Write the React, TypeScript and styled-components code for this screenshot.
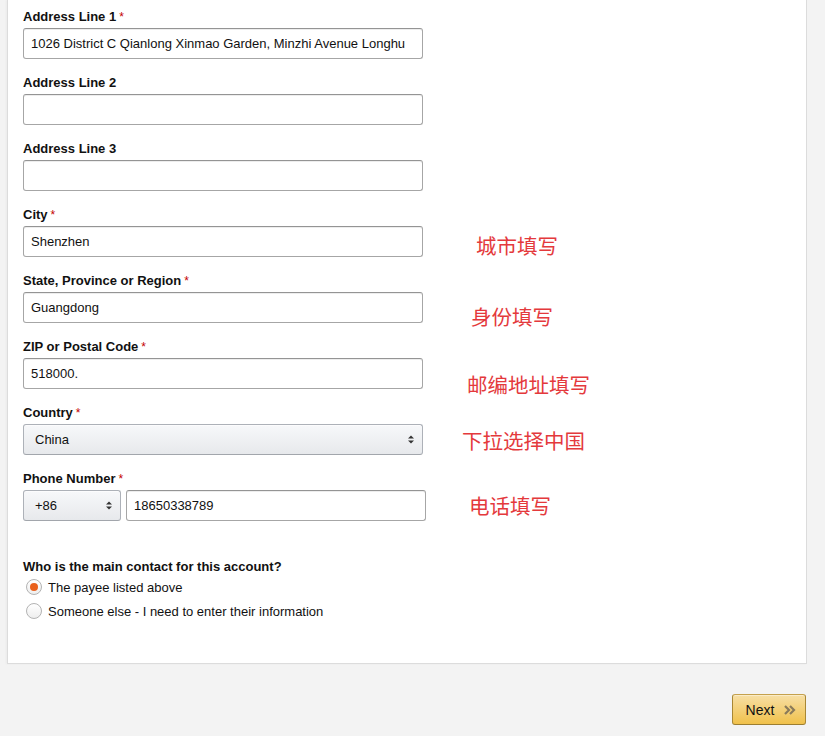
import React from "react";
import styled, { createGlobalStyle } from "styled-components";

const Global = createGlobalStyle`
  html, body { margin: 0; padding: 0; background: #f3f3f3; }
  body { font-family: Arial, "Liberation Sans", sans-serif; color: #111; }
  * { box-sizing: border-box; }
`;

const Page = styled.div`
  width: 825px;
  height: 736px;
  overflow: hidden;
  background: #f3f3f3;
`;

const Panel = styled.div`
  margin-left: 7px;
  width: 800px;
  background: #fff;
  border: 1px solid #dcdcdc;
  border-top: none;
  box-shadow: -1px 0 2px rgba(0, 0, 0, 0.04);
  padding: 9px 15px 40px 15px;
`;

const Group = styled.div`
  position: relative;
  margin-bottom: 16px;
`;

const Label = styled.label`
  display: block;
  font-family: Arial, "Liberation Sans", sans-serif;
  font-weight: bold;
  font-size: 13px;
  line-height: 16px;
  height: 16px;
  margin-bottom: 3px;
  color: #111;
`;

const Star = styled.span`
  color: #c40000;
  font-weight: normal;
  font-size: 12px;
  margin-left: 3px;
`;

const TextInput = styled.input<{ $w?: number }>`
  display: block;
  width: ${(p) => p.$w ?? 400}px;
  height: 31px;
  padding: 0 7px;
  border: 1px solid #a6a6a6;
  border-top-color: #949494;
  border-radius: 3px;
  box-shadow: 0 1px 0 rgba(0, 0, 0, 0.07) inset;
  background: #fff;
  font-family: Arial, "Liberation Sans", sans-serif;
  font-size: 13px;
  color: #111;
  outline: none;
`;

const SelectWrap = styled.div<{ $w: number }>`
  position: relative;
  width: ${(p) => p.$w}px;
  height: 31px;
  flex: none;
`;

const Select = styled.select<{ $pad: number }>`
  appearance: none;
  -webkit-appearance: none;
  display: block;
  width: 100%;
  height: 31px;
  padding: 0 24px 0 ${(p) => p.$pad}px;
  border: 1px solid #adb1b8;
  border-bottom-color: #a2a6ac;
  border-radius: 3px;
  background: linear-gradient(to bottom, #f7f8fa, #e7e9ec);
  box-shadow: 0 1px 0 rgba(255, 255, 255, 0.6) inset;
  font-family: Arial, "Liberation Sans", sans-serif;
  font-size: 13px;
  color: #111;
  outline: none;
`;

const Arrow = styled.svg`
  position: absolute;
  right: 9px;
  top: 11px;
  pointer-events: none;
`;

const Row = styled.div`
  display: flex;
  gap: 5px;
`;

const Note = styled.div<{ $top: number; $left: number }>`
  position: absolute;
  top: ${(p) => p.$top}px;
  left: ${(p) => p.$left}px;
  font-family: "Noto Sans CJK SC", sans-serif;
  font-size: 20.5px;
  line-height: 20px;
  color: #e4393c;
  white-space: nowrap;
`;

const Question = styled.div`
  margin-top: 38px;
  font-weight: bold;
  font-size: 13px;
  line-height: 16px;
  color: #111;
`;

const RadioRow = styled.label`
  display: flex;
  align-items: center;
  height: 24px;
  font-size: 13px;
  color: #111;
  padding-left: 3px;
`;

const RadioCircle = styled.span<{ $on?: boolean }>`
  width: 16px;
  height: 16px;
  border-radius: 50%;
  border: 1px solid #b3b3b3;
  background: linear-gradient(to bottom, #fff, #eee);
  display: flex;
  align-items: center;
  justify-content: center;
  margin-right: 6px;
  &::after {
    content: "";
    display: ${(p) => (p.$on ? "block" : "none")};
    width: 8px;
    height: 8px;
    border-radius: 50%;
    background: #e9601c;
  }
`;

const Footer = styled.div`
  margin-left: 7px;
  width: 800px;
  display: flex;
  justify-content: flex-end;
  padding-top: 30px;
`;

const NextButton = styled.button`
  width: 74px;
  height: 31px;
  display: flex;
  align-items: center;
  justify-content: center;
  gap: 10px;
  border: 1px solid #a88734;
  border-color: #c5a14d #a88734 #9c7e31;
  border-radius: 3px;
  background: linear-gradient(to bottom, #f7dfa5, #f0c14b);
  box-shadow: 0 1px 0 rgba(255, 255, 255, 0.4) inset;
  font-family: Arial, "Liberation Sans", sans-serif;
  font-size: 14px;
  color: #111;
  padding: 0 0 0 4px;
  margin-right: 1px;
`;

const UpDown = () => (
  <Arrow width="6" height="9" viewBox="0 0 6 9">
    <path d="M0 3.5 L3 0.5 L6 3.5 Z" fill="#333" />
    <path d="M0 5.5 L3 8.5 L6 5.5 Z" fill="#333" />
  </Arrow>
);

const Field = ({
  label,
  required,
  value,
  note,
  noteTop,
  noteLeft,
}: {
  label: string;
  required?: boolean;
  value?: string;
  note?: string;
  noteTop?: number;
  noteLeft?: number;
}) => (
  <Group>
    <Label>
      {label}
      {required && <Star>*</Star>}
    </Label>
    <TextInput defaultValue={value ?? ""} />
    {note && (
      <Note $top={noteTop ?? 0} $left={noteLeft ?? 0}>
        {note}
      </Note>
    )}
  </Group>
);

export default function App() {
  return (
    <Page>
      <Global />
      <Panel>
        <Field
          label="Address Line 1"
          required
          value="1026 District C Qianlong Xinmao Garden, Minzhi Avenue Longhu"
        />
        <Field label="Address Line 2" />
        <Field label="Address Line 3" />
        <Field label="City" required value="Shenzhen" note="城市填写" noteTop={28} noteLeft={453} />
        <Field
          label="State, Province or Region"
          required
          value="Guangdong"
          note="身份填写"
          noteTop={33}
          noteLeft={448}
        />
        <Field
          label="ZIP or Postal Code"
          required
          value="518000."
          note="邮编地址填写"
          noteTop={35}
          noteLeft={444}
        />
        <Group>
          <Label>
            Country<Star>*</Star>
          </Label>
          <SelectWrap $w={400}>
            <Select $pad={11} defaultValue="China">
              <option>China</option>
            </Select>
            <UpDown />
          </SelectWrap>
          <Note $top={25} $left={439}>下拉选择中国</Note>
        </Group>
        <Group>
          <Label>
            Phone Number<Star>*</Star>
          </Label>
          <Row>
            <SelectWrap $w={98}>
              <Select $pad={11} defaultValue="+86">
                <option>+86</option>
              </Select>
              <UpDown />
            </SelectWrap>
            <TextInput $w={300} defaultValue="18650338789" />
          </Row>
          <Note $top={24} $left={446}>电话填写</Note>
        </Group>
        <Question>Who is the main contact for this account?</Question>
        <RadioRow>
          <RadioCircle $on />
          The payee listed above
        </RadioRow>
        <RadioRow>
          <RadioCircle />
          Someone else - I need to enter their information
        </RadioRow>
      </Panel>
      <Footer>
        <NextButton>
          Next
          <svg width="12" height="10" viewBox="0 0 12 10">
            <path d="M1 1 L5 5 L1 9" fill="none" stroke="#8a7a5a" strokeWidth="2.2" />
            <path d="M6 1 L10 5 L6 9" fill="none" stroke="#8a7a5a" strokeWidth="2.2" />
          </svg>
        </NextButton>
      </Footer>
    </Page>
  );
}
